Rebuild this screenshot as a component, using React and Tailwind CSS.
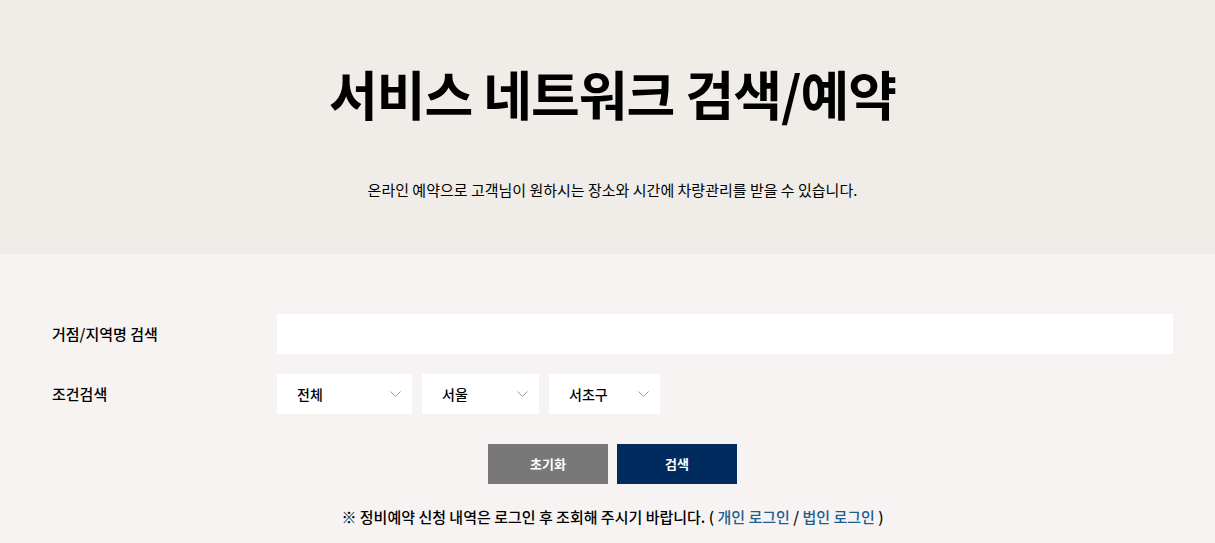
import { useState } from 'react';

const font = { fontFamily: '"Noto Sans CJK KR", "Noto Sans", sans-serif' };

function Chevron() {
  return (
    <svg className="w-[11px] h-[7px]" viewBox="0 0 11 7" fill="none" stroke="#9a9a9a" strokeWidth="1">
      <path d="M0.5 0.5L5.5 5.5L10.5 0.5" />
    </svg>
  );
}

function SelectBox({ value, width }) {
  return (
    <div className={`${width} h-10 bg-white flex items-center justify-between pl-5 pr-[11px]`}>
      <span className="text-sm font-medium text-black">{value}</span>
      <Chevron />
    </div>
  );
}

export default function App() {
  const [keyword, setKeyword] = useState('');

  return (
    <div className="w-full min-h-[543px] bg-[#f7f3f2]" style={font}>
      {/* 상단 타이틀 */}
      <section className="h-[254px] bg-[#f0ece8] pl-[10px] flex flex-col items-center">
        <h1 className="mt-[59px] text-[53px] leading-[68px] font-bold tracking-[-1px] text-black">서비스 네트워크 검색/예약</h1>
        <p className="mt-[53px] text-[15px] leading-5 text-black">온라인 예약으로 고객님이 원하시는 장소와 시간에 차량관리를 받을 수 있습니다.</p>
      </section>

      <div className="pl-[10px]">
        {/* 검색 폼 */}
        <section className="pt-[60px] px-[42px]">
          <div className="flex items-center">
            <label className="w-[225px] text-[15px] font-medium text-black">거점/지역명 검색</label>
            <input
              value={keyword}
              onChange={(e) => setKeyword(e.target.value)}
              className="flex-1 h-10 bg-white px-4 text-sm outline-none"
            />
          </div>
          <div className="flex items-center mt-5">
            <label className="w-[225px] text-[15px] font-medium text-black">조건검색</label>
            <div className="flex gap-[10px]">
              <SelectBox value="전체" width="w-[135px]" />
              <SelectBox value="서울" width="w-[117px]" />
              <SelectBox value="서초구" width="w-[111px]" />
            </div>
          </div>
        </section>

        <div className="flex justify-center gap-[9px] mt-[30px]">
          <button className="w-[120px] h-10 bg-[#787878] text-white text-[13px] font-bold">초기화</button>
          <button className="w-[120px] h-10 bg-[#002b5e] text-white text-[13px] font-bold">검색</button>
        </div>

        <p className="mt-[22px] text-center text-[15px] font-medium text-black">
          ※ 정비예약 신청 내역은 로그인 후 조회해 주시기 바랍니다. ({' '}
          <a className="text-[#1b5f8f]">개인 로그인</a> /{' '}
          <a className="text-[#1b5f8f]">법인 로그인</a> )
        </p>
      </div>
    </div>
  );
}
